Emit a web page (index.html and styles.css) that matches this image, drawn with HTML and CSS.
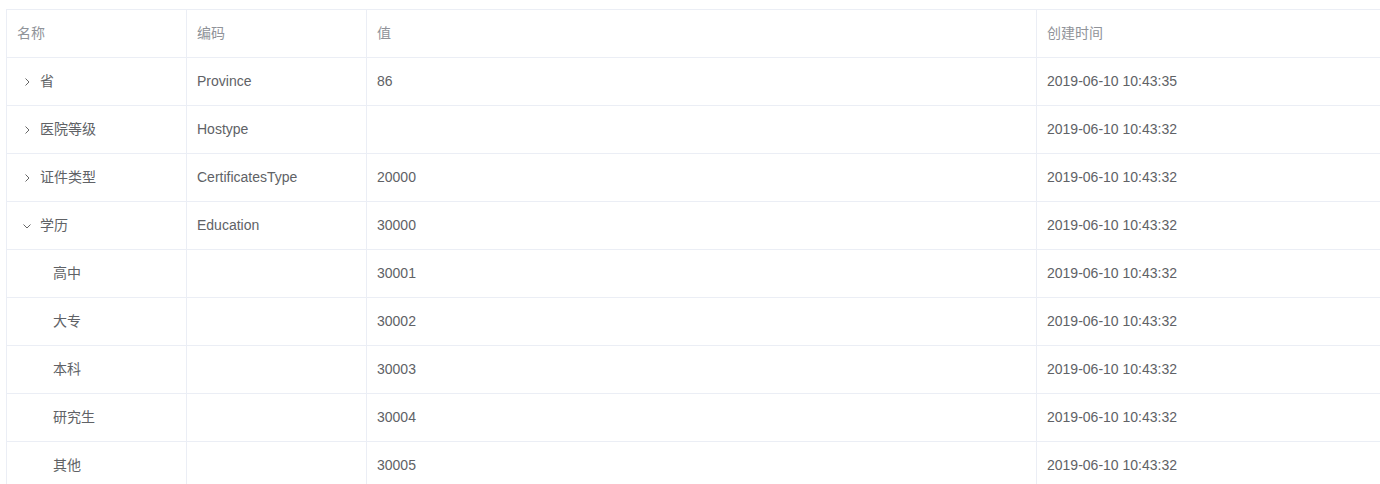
FILE: index.html
```html
<!DOCTYPE html>
<html>
<head>
    <title>字典管理</title>
    <link rel="stylesheet" href="styles.css">
</head>
<body>
    <div class="table-wrap">
        <table class="dict-table">
            <colgroup>
                <col class="col-name">
                <col class="col-code">
                <col class="col-value">
                <col class="col-time">
            </colgroup>
            <thead>
                <tr>
                    <th><div class="cell">名称</div></th>
                    <th><div class="cell">编码</div></th>
                    <th><div class="cell">值</div></th>
                    <th><div class="cell">创建时间</div></th>
                </tr>
            </thead>
            <tbody>
                <tr>
                    <td><div class="cell"><span class="expand-icon"><svg width="12" height="12" viewBox="0 0 12 12"><path d="M4.5 2.5 L8 6 L4.5 9.5" fill="none" stroke="#666" stroke-width="1"/></svg></span>省</div></td>
                    <td><div class="cell">Province</div></td>
                    <td><div class="cell">86</div></td>
                    <td><div class="cell">2019-06-10 10:43:35</div></td>
                </tr>
                <tr>
                    <td><div class="cell"><span class="expand-icon"><svg width="12" height="12" viewBox="0 0 12 12"><path d="M4.5 2.5 L8 6 L4.5 9.5" fill="none" stroke="#666" stroke-width="1"/></svg></span>医院等级</div></td>
                    <td><div class="cell">Hostype</div></td>
                    <td><div class="cell"></div></td>
                    <td><div class="cell">2019-06-10 10:43:32</div></td>
                </tr>
                <tr>
                    <td><div class="cell"><span class="expand-icon"><svg width="12" height="12" viewBox="0 0 12 12"><path d="M4.5 2.5 L8 6 L4.5 9.5" fill="none" stroke="#666" stroke-width="1"/></svg></span>证件类型</div></td>
                    <td><div class="cell">CertificatesType</div></td>
                    <td><div class="cell">20000</div></td>
                    <td><div class="cell">2019-06-10 10:43:32</div></td>
                </tr>
                <tr>
                    <td><div class="cell"><span class="expand-icon expanded"><svg width="12" height="12" viewBox="0 0 12 12"><path d="M4.5 2.5 L8 6 L4.5 9.5" fill="none" stroke="#666" stroke-width="1"/></svg></span>学历</div></td>
                    <td><div class="cell">Education</div></td>
                    <td><div class="cell">30000</div></td>
                    <td><div class="cell">2019-06-10 10:43:32</div></td>
                </tr>
                <tr>
                    <td><div class="cell"><span class="indent"></span><span class="placeholder"></span>高中</div></td>
                    <td><div class="cell"></div></td>
                    <td><div class="cell">30001</div></td>
                    <td><div class="cell">2019-06-10 10:43:32</div></td>
                </tr>
                <tr>
                    <td><div class="cell"><span class="indent"></span><span class="placeholder"></span>大专</div></td>
                    <td><div class="cell"></div></td>
                    <td><div class="cell">30002</div></td>
                    <td><div class="cell">2019-06-10 10:43:32</div></td>
                </tr>
                <tr>
                    <td><div class="cell"><span class="indent"></span><span class="placeholder"></span>本科</div></td>
                    <td><div class="cell"></div></td>
                    <td><div class="cell">30003</div></td>
                    <td><div class="cell">2019-06-10 10:43:32</div></td>
                </tr>
                <tr>
                    <td><div class="cell"><span class="indent"></span><span class="placeholder"></span>研究生</div></td>
                    <td><div class="cell"></div></td>
                    <td><div class="cell">30004</div></td>
                    <td><div class="cell">2019-06-10 10:43:32</div></td>
                </tr>
                <tr>
                    <td><div class="cell"><span class="indent"></span><span class="placeholder"></span>其他</div></td>
                    <td><div class="cell"></div></td>
                    <td><div class="cell">30005</div></td>
                    <td><div class="cell">2019-06-10 10:43:32</div></td>
                </tr>
            </tbody>
        </table>
    </div>
</body>
</html>
```

FILE: styles.css
```css
body {
    margin: 0;
    overflow: hidden;
    background-color: #fff;
    font-family: "Liberation Sans", "Noto Sans CJK SC", Arial, sans-serif;
    font-size: 14px;
    color: #606266;
}
.table-wrap {
    padding: 9px 0 0 6px;
}
.dict-table {
    width: 1400px;
    table-layout: fixed;
    border-collapse: collapse;
    border-top: 1px solid #EBEEF5;
    border-left: 1px solid #EBEEF5;
}
.col-name {
    width: 180px;
}
.col-code {
    width: 180px;
}
.col-value {
    width: 670px;
}
th,
td {
    padding: 12px 0;
    border-right: 1px solid #EBEEF5;
    border-bottom: 1px solid #EBEEF5;
    text-align: left;
    font-weight: normal;
}
th {
    color: #909399;
}
.cell {
    padding: 0 10px;
    line-height: 23px;
    height: 23px;
    white-space: nowrap;
    overflow: hidden;
}
.expand-icon {
    display: inline-block;
    width: 20px;
    height: 20px;
    line-height: 20px;
    margin-right: 3px;
    text-align: center;
    vertical-align: top;
    padding-top: 1px;
}
.expand-icon svg {
    vertical-align: middle;
}
.expand-icon.expanded svg {
    transform: rotate(90deg);
}
.indent {
    display: inline-block;
    width: 16px;
}
.placeholder {
    display: inline-block;
    width: 20px;
}
```
